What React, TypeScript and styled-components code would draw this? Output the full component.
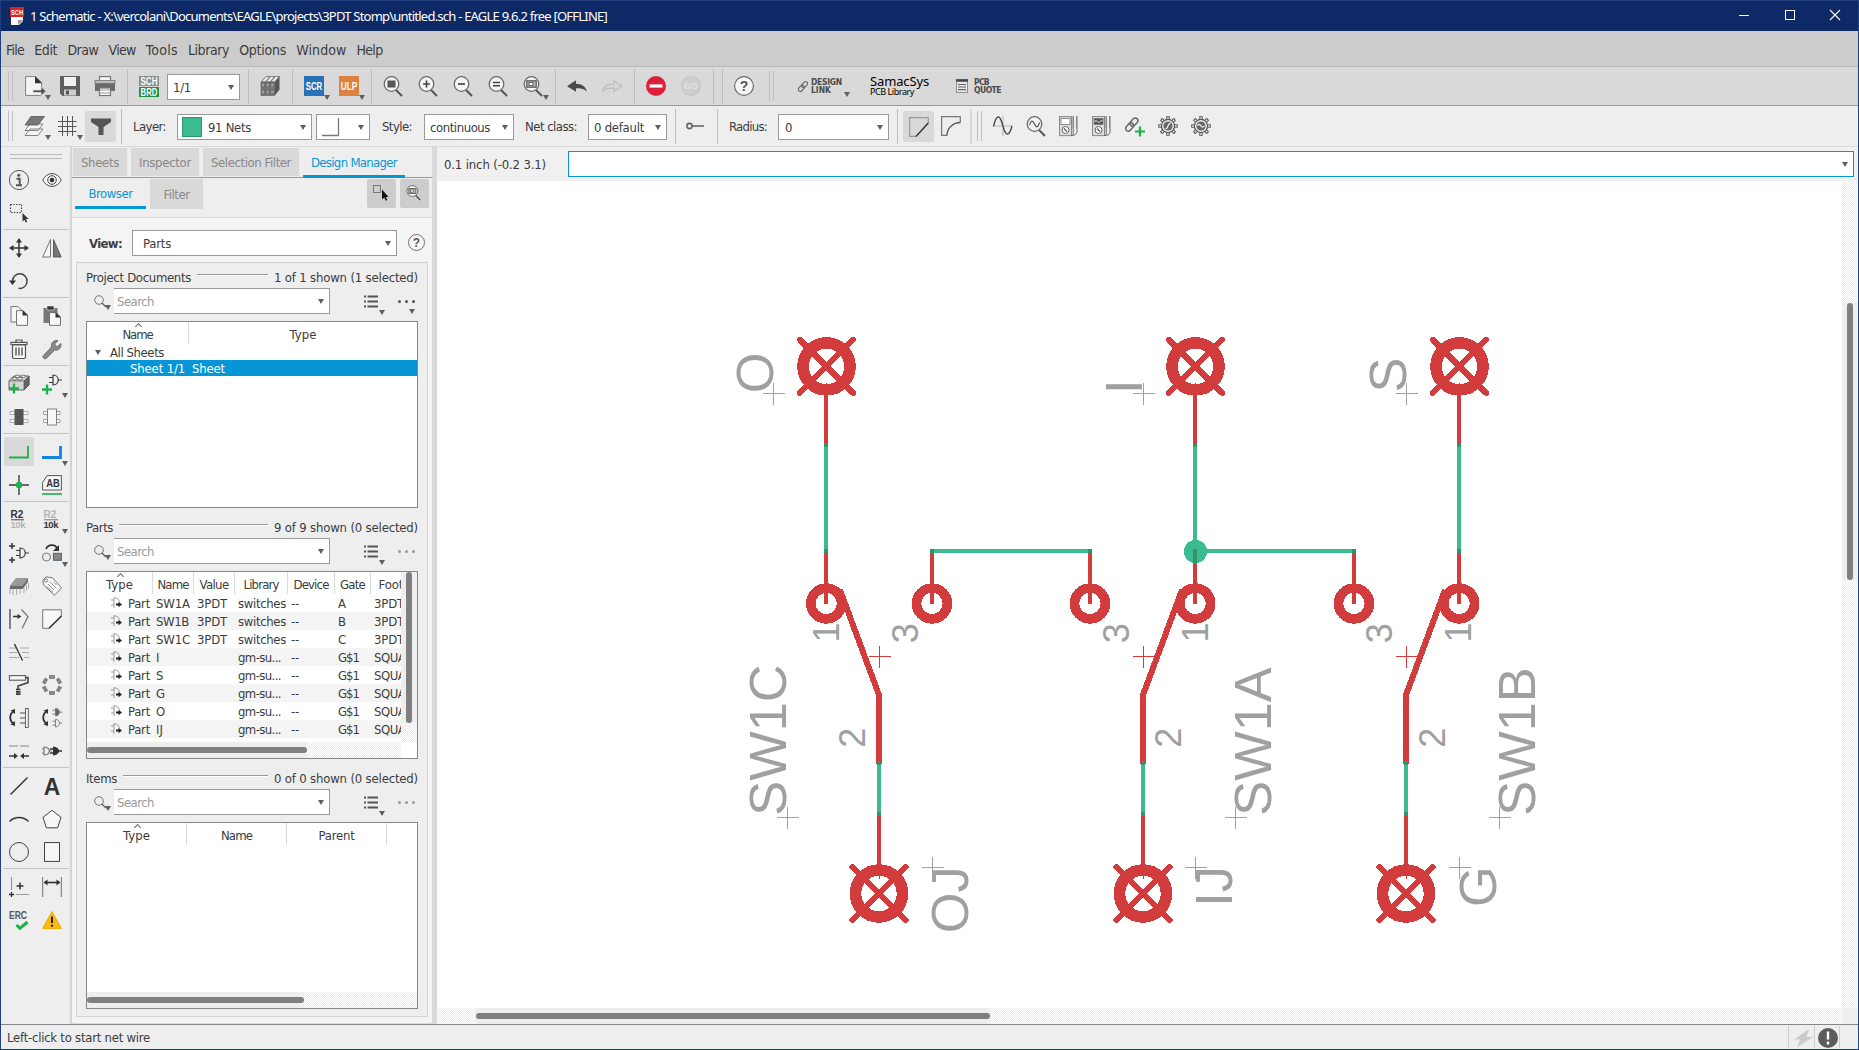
import React from "react";
import styled, { createGlobalStyle, css } from "styled-components";

const UI = '"DejaVu Sans Condensed", "DejaVu Sans", "Noto Sans", sans-serif';
const TITLE = '"Noto Sans", "Open Sans", sans-serif';
const DARK = "#3c3c3c";
const BLUE = "#0696d7";
const GREEN = "#1bb14c";

const Global = createGlobalStyle`
  * { box-sizing: border-box; }
  body { margin: 0; background: #eee; }
`;

/* ---------- text that keeps a given advance width ---------- */
const Label = styled.span<{ $size: number; $font: string; $color: string; $bold?: boolean }>`
  display: block;
  flex: none;
  white-space: pre;
  padding-top: 2px;
  font-family: ${(p) => p.$font};
  font-stretch: ${(p) => (p.$font === UI ? "condensed" : "normal")};
  font-size: ${(p) => p.$size}px;
  font-weight: ${(p) => (p.$bold ? 700 : 400)};
  color: ${(p) => p.$color};
  line-height: 16px;
`;

let pen: CanvasRenderingContext2D | null = null;
function spacingFor(text: string, width: number, size: number, font: string, bold?: boolean) {
  if (!pen) pen = document.createElement("canvas").getContext("2d");
  if (!pen) return 0;
  pen.font = `${bold ? "bold " : ""}${size}px ${font}`;
  return (width - pen.measureText(text).width) / text.length;
}

type TProps = { children: string; w?: number; size?: number; font?: string; color?: string; bold?: boolean };
function T({ children, w, size = 13, font = UI, color = DARK, bold }: TProps) {
  const style = w ? { width: w, letterSpacing: spacingFor(children, w, size, font, bold) } : undefined;
  return (
    <Label $size={size} $font={font} $color={color} $bold={bold} style={style}>
      {children}
    </Label>
  );
}

/* ---------- frame ---------- */
const Frame = styled.div`
  width: 1859px;
  height: 1050px;
  display: flex;
  flex-direction: column;
  border: 1px solid #213f7c;
  background: #eee;
  overflow: hidden;
`;
const TitleBar = styled.header`
  height: 30px;
  flex: none;
  display: flex;
  align-items: center;
  background: #0d2a66;
  padding-left: 8px;
`;
const TitleText = styled.div`
  margin-left: 5px;
  padding-bottom: 3px;
  flex: 1;
`;
const WindowButtons = styled.div`
  display: flex;
  gap: 35.5px;
  padding: 0 18px 2px 0;
`;
const MenuBar = styled.nav`
  height: 36px;
  flex: none;
  display: flex;
  align-items: center;
  padding-left: 5px;
  gap: 10.2px;
  background: #cccccc;
  border-bottom: 1px solid #b8b8b8;
`;
const ToolRow = styled.div<{ $light?: boolean }>`
  height: ${(p) => (p.$light ? 41 : 39)}px;
  flex: none;
  display: flex;
  align-items: center;
  background: ${(p) => (p.$light ? "#eeeeee" : "#d9d9d9")};
  border-bottom: 1px solid ${(p) => (p.$light ? "#d9d9d9" : "#999")};
`;
const Slot = styled.div<{ $ml: number; $w?: number; $h?: number; $on?: boolean }>`
  position: relative;
  flex: none;
  display: flex;
  flex-direction: column;
  align-items: ${(p) => (p.$on ? "center" : "flex-start")};
  justify-content: center;
  margin-left: ${(p) => p.$ml}px;
  margin-top: ${(p) => (p.$on ? 1 : 0)}px;
  width: ${(p) => p.$w ?? 20}px;
  height: ${(p) => p.$h ?? 20}px;
  border-radius: 2px;
  background: ${(p) => (p.$on ? "#d9d9d9" : "transparent")};
`;
const Sep = styled.div<{ $ml: number; $w?: number; $c?: string }>`
  flex: none;
  width: ${(p) => p.$w ?? 1}px;
  height: 35px;
  margin-left: ${(p) => p.$ml}px;
  background: ${(p) => p.$c ?? "#bdbdbd"};
`;
const Grip = styled.div<{ $ml: number }>`
  flex: none;
  width: 5px;
  height: 30px;
  margin-left: ${(p) => p.$ml}px;
  border-left: 1px solid #c0c0c0;
  border-right: 1px solid #c0c0c0;
`;
const caret = css`
  width: 0;
  height: 0;
  border-left: 3px solid transparent;
  border-right: 3px solid transparent;
  border-top: 5px solid #5f5f5f;
`;
const Caret = styled.i`
  ${caret}
  flex: none;
`;
const CornerCaret = styled.i<{ $r?: number; $b?: number }>`
  ${caret}
  position: absolute;
  right: ${(p) => p.$r ?? -6}px;
  bottom: ${(p) => p.$b ?? -4}px;
`;
const Combo = styled.div<{ $ml?: number; $w: number; $pad?: number; $right?: number; $flush?: boolean }>`
  flex: none;
  height: 26px;
  width: ${(p) => p.$w}px;
  margin-top: ${(p) => (p.$flush ? 0 : 2)}px;
  margin-left: ${(p) => p.$ml ?? 0}px;
  padding: 0 ${(p) => p.$right ?? 5}px 0 ${(p) => p.$pad ?? 5}px;
  display: flex;
  align-items: center;
  background: #fff;
  border: 1px solid #999;
`;
const Spring = styled.div`
  flex: 1;
`;
const Swatch = styled.div`
  width: 20px;
  height: 20px;
  margin: 0 6px 0 -1px;
  background: #3dba8f;
  border: 1px solid #2a9a74;
`;
const TwoLine = styled.div<{ $ml: number; $w: number }>`
  position: relative;
  flex: none;
  display: flex;
  flex-direction: column;
  margin-left: ${(p) => p.$ml}px;
  width: ${(p) => p.$w}px;
  & > span {
    padding: 0;
    line-height: 8px;
  }
`;
const Samac = styled(TwoLine)`
  & > span {
    line-height: 12px;
  }
  & > span + span {
    line-height: 10px;
  }
`;

/* ---------- icons ---------- */
const Svg = styled.svg<{ $w?: number; $h?: number }>`
  display: block;
  flex: none;
  width: ${(p) => p.$w ?? 20}px;
  height: ${(p) => p.$h ?? 20}px;
  overflow: visible;
  fill: none;
  stroke: ${DARK};
  stroke-width: 1.2;
`;
const Sized = styled.div<{ $s: number }>`
  flex: none;
  width: ${(p) => p.$s}px;
  height: ${(p) => p.$s}px;
  & > svg {
    width: ${(p) => p.$s}px;
    height: ${(p) => p.$s}px;
  }
`;
const Txt = styled.text`
  font-family: "Liberation Sans", sans-serif;
  font-weight: 700;
  stroke: none;
`;

const mag = (inner: React.ReactNode) => (
  <Svg viewBox="0 0 20 20">
    <path d="M13 14l6 6" stroke="#555" strokeWidth="2" />
    <circle cx="8.500" cy="8" r="7.300" fill="#f4f4f4" stroke="#6a6a6a" strokeWidth="1.300" />
    {inner}
  </Svg>
);
const gear = (inner: React.ReactNode) => (
  <Svg viewBox="0 0 20 20">
    <g stroke="#555" strokeWidth="3.400">
      {[0, 45, 90, 135, 180, 225, 270, 315].map((a) => (
        <path key={a} d="M10 3.600V.2" transform={`rotate(${a} 10 10)`} />
      ))}
    </g>
    <g stroke="#eee" strokeWidth="1.600">
      {[0, 45, 90, 135, 180, 225, 270, 315].map((a) => (
        <path key={a} d="M10 4V1.200" transform={`rotate(${a} 10 10)`} />
      ))}
    </g>
    <circle cx="10" cy="10" r="6.600" fill="#eee" stroke="#555" />
    <circle cx="10" cy="10" r="4.600" fill="#666" stroke="none" />
    {inner}
  </Svg>
);
const meter = (dark: boolean) => (
  <Svg viewBox="0 0 20 20">
    <rect x=".5" y=".6" width="12" height="19" fill="#dedede" stroke="#888" strokeWidth="1" />
    <rect x="2" y="2.500" width="9" height="6" fill={dark ? "#555" : "#fff"} stroke="#777" strokeWidth=".8" />
    {dark && <path d="M2.500 6c2-4 3 2 5 0s2-1 3-1" stroke="#fff" strokeWidth=".9" />}
    <circle cx="6.500" cy="14" r="3.500" fill="#fff" stroke="#666" strokeWidth="1" />
    <path d="M5 12.500l3 3" stroke="#555" />
    <path d="M14.200 0v12M17.800 0v12" stroke="#888" strokeWidth="1.600" />
    <path d="M14.200 12v5.500c0 2-1 2-2 2M17.800 12c1 4 0 7.500-5 7.500" stroke="#666" strokeWidth="1" />
  </Svg>
);
const chain = (
  <g stroke="#666" strokeWidth="1.300">
    <rect x="5.500" y="1.300" width="4.600" height="8" rx="2.300" transform="rotate(42 7.800 5.300)" />
    <rect x="1.700" y="5.600" width="4.600" height="8" rx="2.300" transform="rotate(42 4 9.600)" />
  </g>
);
const gate = (x: number, y: number, fill = "#eee", s = 1) => (
  <g transform={`translate(${x} ${y}) scale(${s})`}>
    <path d="M0 3h4M0 8h4M9 5.500h4" />
    <path d="M4 .5c7 0 7 10 0 10z" fill={fill} />
  </g>
);

const I: Record<string, React.ReactNode> = {
  app: (
    <Svg viewBox="0 0 16 20" $w={16} $h={20}>
      <path d="M2 8h12v7l-4 4H2z" fill="#fff" stroke="none" />
      <path d="M14 14l-5 5v-5z" fill="#999" stroke="none" />
      <rect x="1" y="1" width="14" height="10" fill="#d5242b" stroke="none" />
      <Txt x="8" y="8.500" fontSize="7" textLength="12" lengthAdjust="spacingAndGlyphs" textAnchor="middle" fill="#fff">SCH</Txt>
    </Svg>
  ),
  file: (
    <Svg viewBox="0 0 20 20">
      <path d="M.6.6h10l6 6V19.400H.6z" fill="#f5f5f5" stroke="#777" strokeWidth=".9" />
      <path d="M10 .2v7h7z" fill="#333" stroke="none" />
      <path d="M8 14h8v-3.500l5 4.700-5 4.600V16.500H8z" fill="#555" stroke="#d9d9d9" strokeWidth=".8" />
    </Svg>
  ),
  save: (
    <Svg viewBox="0 0 20 20">
      <path d="M0 0h20v20H2.500L0 17.500z" fill="#5f5f5f" stroke="none" />
      <rect x="4" y="1" width="12" height="9" fill="#f2f2f2" stroke="none" />
      <rect x="4" y="13.500" width="12" height="6" fill="#cfcfcf" stroke="none" />
      <rect x="6" y="14.500" width="3" height="4" fill="#555" stroke="none" />
    </Svg>
  ),
  print: (
    <Svg viewBox="0 0 20 20">
      <rect x="4.500" y=".6" width="11" height="7" fill="#f5f5f5" stroke="#777" />
      <rect x="0" y="4.500" width="20" height="3" fill="#bbb" stroke="#777" strokeWidth=".8" />
      <rect x="0" y="7.500" width="20" height="7.500" fill="#6b6b6b" stroke="none" />
      <rect x="4.500" y="12" width="11" height="7.500" fill="#fff" stroke="#777" />
      <path d="M5 14h10M5 17h10" stroke="#999" />
    </Svg>
  ),
  schbrd: (
    <Svg viewBox="0 0 20 20">
      <rect width="20" height="10" fill="#8d8d8d" stroke="none" />
      <rect y="11" width="20" height="10" fill="#1f8b45" stroke="none" />
      <Txt x="10" y="8.900" fontSize="10.500" textLength="17" lengthAdjust="spacingAndGlyphs" textAnchor="middle" fill="#fff">SCH</Txt>
      <Txt x="10" y="19.700" fontSize="10.500" textLength="17" lengthAdjust="spacingAndGlyphs" textAnchor="middle" fill="#fff">BRD</Txt>
    </Svg>
  ),
  books: (
    <Svg viewBox="0 0 20 20">
      {[0, 4.700, 9.400].map((x) => (
        <g key={x}>
          <path d={`M${x + 1} 6l5-5.500h4l-4.500 5.500z`} fill="#e8e8e8" stroke="#666" strokeWidth=".8" />
          <path d={`M${x + 1} 6h4.200v13.500h-4.200z`} fill="#777" stroke="#555" strokeWidth=".6" />
          <path d={`M${x + 2} 9h2M${x + 2} 16h2`} stroke="#ddd" strokeWidth=".9" />
        </g>
      ))}
      <path d="M14.800 6l4.700-5.500v13l-4.700 6z" fill="#555" stroke="none" />
    </Svg>
  ),
  scr: (
    <Svg viewBox="0 0 20 20">
      <rect width="20" height="20" fill="#2a72b8" stroke="none" />
      <Txt x="10" y="13.700" fontSize="10.500" textLength="16.500" lengthAdjust="spacingAndGlyphs" textAnchor="middle" fill="#fff">SCR</Txt>
    </Svg>
  ),
  ulp: (
    <Svg viewBox="0 0 20 20">
      <rect width="20" height="20" fill="#dd8140" stroke="none" />
      <Txt x="10" y="13.700" fontSize="10.500" textLength="16.500" lengthAdjust="spacingAndGlyphs" textAnchor="middle" fill="#fff">ULP</Txt>
    </Svg>
  ),
  zfit: mag(<rect x="4.500" y="4.500" width="8" height="7" fill="#555" stroke="none" />),
  zin: mag(<path d="M8.500 4.500v7M5 8h7" stroke="#444" strokeWidth="1.700" />),
  zout: mag(<path d="M5 8h7" stroke="#444" strokeWidth="1.700" />),
  zeq: mag(<path d="M5 6.500h7M5 9.800h7" stroke="#444" strokeWidth="1.500" />),
  zsel: mag(
    <g>
      <rect x="3.800" y="4.800" width="9.400" height="6.400" fill="#bbb" stroke="#555" />
      <rect x="6" y="6.500" width="4" height="3" fill="#fff" stroke="#555" strokeWidth=".9" />
    </g>
  ),
  zsine: mag(<path d="M3.500 9c2-6 3.500-4 5-1s3 5 5-1.500" stroke="#555" strokeWidth="1.200" />),
  undo: (
    <Svg viewBox="0 0 20 20">
      <path d="M0 10.200l9-6v3.500c6 0 10 3 11 8-3-3-6-3.500-11-3.300v3.400z" fill="#4a4a4a" stroke="none" />
    </Svg>
  ),
  redo: (
    <Svg viewBox="0 0 20 20">
      <path d="M20 10.200l-8-5.500v3.200C6 8 1.500 10.500.6 15.200c3-2.700 6-3.200 11.400-3v3.200z" fill="#d6d6d6" stroke="#bdbdbd" />
    </Svg>
  ),
  stop: (
    <Svg viewBox="0 0 20 20">
      <circle cx="10" cy="10" r="10" fill="#dc2039" stroke="none" />
      <path d="M3.500 10h13" stroke="#fff" strokeWidth="3.200" />
    </Svg>
  ),
  go: (
    <Svg viewBox="0 0 20 20">
      <circle cx="10" cy="10" r="9.500" fill="#cfcfcf" stroke="#c6c6c6" />
      <Txt x="10" y="13.400" fontSize="9" textAnchor="middle" fill="#e0e0e0">GO</Txt>
    </Svg>
  ),
  help: (
    <Svg viewBox="0 0 20 20">
      <circle cx="10" cy="10" r="9.400" fill="#f5f5f5" stroke="#666" strokeWidth="1.100" />
      <Txt x="10" y="15" fontSize="14" textAnchor="middle" fill="#555">?</Txt>
    </Svg>
  ),
  link: <Svg viewBox="0 0 12 15" $w={12} $h={13}>{chain}</Svg>,
  quote: (
    <Svg viewBox="0 0 12 14" $w={12} $h={14}>
      <rect x=".5" y=".5" width="11" height="13" fill="#e5e5e5" stroke="#888" strokeWidth=".9" />
      <path d="M0 1.500h12" stroke="#444" strokeWidth="2.500" />
      <path d="M2 5.500h8M2 8h8M2 10.700h8" stroke="#666" />
    </Svg>
  ),
  layers: (
    <Svg viewBox="0 0 20 20">
      <path d="M0 19.500l5-6.500h13l-5 6.500zM0 14.500l5-6.500h13l-5 6.500z" fill="#f5f5f5" stroke="#777" strokeWidth=".9" />
      <path d="M0 9L6 .5h13.500L13 9z" fill="#777" stroke="#555" strokeWidth=".8" />
    </Svg>
  ),
  grid: (
    <Svg viewBox="0 0 20 20">
      <path d="M5.500 0v20M10.500 0v20M15.500 0v20M1 5.500h18.500M1 10.500h18.500M1 15.500h18.500" stroke="#555" strokeWidth="1" />
    </Svg>
  ),
  funnel: (
    <Svg viewBox="0 0 20 20">
      <path d="M0 1.500h20v3.500l-7.500 5V18h-5V10L0 5z" fill="#555" stroke="none" />
    </Svg>
  ),
  bend: (
    <Svg viewBox="0 0 20 20">
      <path d="M0 18.500h16.500V1" stroke="#777" strokeWidth="1.300" />
    </Svg>
  ),
  pin: (
    <Svg viewBox="0 0 20 20">
      <circle cx="4.500" cy="10" r="2.600" stroke="#666" strokeWidth="1.600" />
      <path d="M7 10h12" stroke="#666" strokeWidth="1.600" />
    </Svg>
  ),
  miter: (
    <Svg viewBox="0 0 20 20">
      <path d="M19.300 6V.6H.6v18.800H7" fill="none" stroke="#999" />
      <path d="M7 19.400L19.300 6" stroke="#333" strokeWidth="1.500" />
    </Svg>
  ),
  round: (
    <Svg viewBox="0 0 20 20">
      <path d="M19.300 6V.6H.6v18.800H6" stroke="#777" />
      <path d="M6 19.400C6 12 12 6.500 19.500 6.500" stroke="#555" strokeWidth="1.300" />
    </Svg>
  ),
  sine: (
    <Svg viewBox="0 0 20 20">
      <path d="M10 0v20M0 10h20" stroke="#bbb" />
      <path d="M.5 10.500C3-1 6.500-2 9 7l2 6.500c2.500 7 5.500 6 8-3.500" stroke="#444" strokeWidth="1.300" />
    </Svg>
  ),
  meter: meter(false),
  meterDark: meter(true),
  linkAdd: (
    <Svg viewBox="0 0 20 20">
      <g transform="scale(1.150)">{chain}</g>
      <path d="M15 10.500v10M10 15.500h10" stroke={GREEN} strokeWidth="2.200" />
    </Svg>
  ),
  gearA: gear(<path d="M7.500 13c3 0 1.500-5 5-6" stroke="#fff" />),
  gearB: gear(<path d="M6.500 10c1.500-3 2.500-1 3.500 0s2 2 3.500-.5" stroke="#eee" />),
  info: (
    <Svg viewBox="0 0 20 20">
      <circle cx="10" cy="10" r="9.600" stroke="#444" strokeWidth=".9" />
      <circle cx="9.800" cy="5.300" r="1.500" fill="#555" stroke="none" />
      <path d="M7.500 8.700h3.200v6.300M7 15.200h6" stroke="#555" strokeWidth="1.900" />
    </Svg>
  ),
  eye: (
    <Svg viewBox="0 0 20 20">
      <path d="M.8 10C5 1.500 15 1.500 19.200 10 15 18.500 5 18.500.8 10z" stroke="#444" strokeWidth="1" fill="#f4f4f4" />
      <circle cx="10" cy="10" r="4.300" stroke="#444" strokeWidth="1" />
      <circle cx="10" cy="10" r="2.300" fill="#333" stroke="none" />
    </Svg>
  ),
  group: (
    <Svg viewBox="0 0 20 20">
      <rect x="1.500" y="1.500" width="11" height="8" stroke="#444" strokeDasharray="1.500 1.300" />
      <path d="M13.500 10v8.500l2-1.800 1.200 2.900 1.500-.7-1.200-2.800h2.600z" fill="#333" stroke="none" />
    </Svg>
  ),
  move: (
    <Svg viewBox="0 0 20 20">
      <path d="M10 2v16M2 10h16" stroke="#333" strokeWidth="1.500" />
      <path d="M10 0l3 4.500H7zM10 20l3-4.500H7zM0 10l4.500-3v6zM20 10l-4.500-3v6z" fill="#333" stroke="none" />
    </Svg>
  ),
  mirror: (
    <Svg viewBox="0 0 20 20">
      <path d="M8.500 1.500v17.500H.8z" fill="#f7f7f7" stroke="#666" strokeWidth=".9" />
      <path d="M11.500 1.500v17.500h7.700z" fill="#777" stroke="#555" strokeWidth=".9" />
    </Svg>
  ),
  rotate: (
    <Svg viewBox="0 0 20 20">
      <path d="M3.500 10a7.300 7.300 0 1 1 6 7.300" stroke="#444" strokeWidth="1.500" />
      <path d="M0 9.500h7L3.500 14z" fill="#333" stroke="none" />
    </Svg>
  ),
  copy: (
    <Svg viewBox="0 0 20 20">
      <path d="M2 .6h7l3 3V16H2z" fill="#f7f7f7" stroke="#666" strokeWidth=".9" />
      <path d="M7.500 4.600h6.500l4.500 4.500v10.300h-11z" fill="#f7f7f7" stroke="#666" strokeWidth=".9" />
      <path d="M13.500 4v5.500H19z" fill="#333" stroke="none" />
    </Svg>
  ),
  paste: (
    <Svg viewBox="0 0 20 20">
      <path d="M1.500 2h14v15h-14z" fill="#777" stroke="none" />
      <path d="M5 0h7v4H5z" fill="#333" stroke="#eee" strokeWidth=".6" />
      <path d="M7.500 6.600h6.500l4.500 4.500v8.300h-11z" fill="#f7f7f7" stroke="#666" strokeWidth=".9" />
      <path d="M13.500 6v5.500H19z" fill="#333" stroke="none" />
    </Svg>
  ),
  trash: (
    <Svg viewBox="0 0 20 20">
      <path d="M3.500 6h13v12c0 1-.5 1.500-1.500 1.500H5c-1 0-1.500-.5-1.500-1.500z" fill="#f7f7f7" stroke="#555" />
      <path d="M2 5.500V3.300h16v2.200zM7 3V1h6v2" stroke="#555" />
      <path d="M7 8.500v8M10 8.500v8M13 8.500v8" stroke="#555" strokeWidth="1.400" />
    </Svg>
  ),
  wrench: (
    <Svg viewBox="0 0 20 20">
      <path d="M1.500 16.500L9.500 8c-.8-4 2.500-7.500 6.500-6.300l-3.200 3 .6 2.200 2.200.6 3.200-3c1 4.200-2.400 7.400-6.300 6.500l-8 8.200c-2 1.500-4.500-.7-3-2.700z" fill="#8a8a8a" stroke="#555" strokeWidth=".8" />
    </Svg>
  ),
  addPart: (
    <Svg viewBox="0 0 20 20">
      <path d="M0 6.500L5 2h15v9l-5 5H0z" fill="#d5d5d5" stroke="#555" strokeWidth=".9" />
      <path d="M15 7v9l5-5V2z" fill="#666" stroke="#555" strokeWidth=".7" />
      <g fill="#f5f5f5" stroke="#555" strokeWidth=".8">
        <ellipse cx="5.500" cy="4.700" rx="2.300" ry="1.300" />
        <ellipse cx="11" cy="4.700" rx="2.300" ry="1.300" />
        <ellipse cx="8.500" cy="2.300" rx="2.200" ry="1.200" />
        <ellipse cx="14.500" cy="2.300" rx="2.200" ry="1.200" />
      </g>
      <path d="M0 6.900h15" stroke="#555" strokeWidth=".8" />
      <path d="M5 9.500v10M0 14.500h10" stroke={GREEN} strokeWidth="2.300" />
    </Svg>
  ),
  addGate: (
    <Svg viewBox="0 0 20 20">
      {gate(7, 0.5)}
      <path d="M5 10.500v10M0 15.500h10" stroke={GREEN} strokeWidth="2.300" />
    </Svg>
  ),
  chipDark: (
    <Svg viewBox="0 0 20 20">
      <path d="M1 4.500h5v3H1zM1 12.500h5v3H1zM14 4.500h5v3h-5zM14 12.500h5v3h-5z" fill="#fff" stroke="#999" strokeWidth=".8" />
      <rect x="5.500" y="2" width="9" height="16" fill="#555" stroke="none" />
    </Svg>
  ),
  chip: (
    <Svg viewBox="0 0 20 20">
      <path d="M1.500 4.500h4v3h-4zM1.500 12.500h4v3h-4zM14 4.500h4v3h-4zM14 12.500h4v3h-4z" fill="#fff" stroke="#888" strokeWidth=".8" />
      <rect x="5.500" y="2" width="9" height="16" fill="#f7f7f7" stroke="#777" strokeWidth=".9" />
    </Svg>
  ),
  net: <Svg viewBox="0 0 20 20"><path d="M0 15.500h19V4" stroke={GREEN} strokeWidth="1.800" /></Svg>,
  bus: <Svg viewBox="0 0 20 20"><path d="M0 15.500h18.500V4" stroke="#1683e0" strokeWidth="2.800" /></Svg>,
  junction: (
    <Svg viewBox="0 0 20 20">
      <path d="M10 0v20M0 10h20" stroke="#666" strokeWidth="1.800" />
      <circle cx="10" cy="10" r="3.200" fill={GREEN} stroke="none" />
    </Svg>
  ),
  label: (
    <Svg viewBox="0 0 20 20">
      <path d="M.6 7.500L5 .6h14.400v14.400H.6z" fill="#f7f7f7" stroke="#444" strokeWidth=".9" />
      <Txt x="11" y="12" fontSize="11" textLength="13.500" lengthAdjust="spacingAndGlyphs" textAnchor="middle" fill="#333">AB</Txt>
      <path d="M0 19h20" stroke={GREEN} strokeWidth="1.600" />
    </Svg>
  ),
  name: (
    <Svg viewBox="0 0 20 20">
      <Txt x="1.500" y="7.800" fontSize="10" fill="#333">R2</Txt>
      <path d="M2 9.800h13" strokeWidth="1" stroke="#444" />
      <Txt x="1.500" y="18.300" fontSize="9.500" fill="#b5b5b5" textLength="15">10k</Txt>
    </Svg>
  ),
  value: (
    <Svg viewBox="0 0 20 20">
      <Txt x="1.500" y="7.800" fontSize="10" fill="#b5b5b5">R2</Txt>
      <path d="M2 9.800h14" strokeWidth="1" stroke="#777" />
      <Txt x="1.500" y="18.300" fontSize="9.500" fill="#333" textLength="15">10k</Txt>
    </Svg>
  ),
  invoke: (
    <Svg viewBox="0 0 20 20">
      <path d="M3 0v6M0 3h6M3 14v6M0 17h6" stroke="#333" strokeWidth="1.500" />
      {gate(7, 4.5)}
    </Svg>
  ),
  replace: (
    <Svg viewBox="0 0 20 20">
      <path d="M4 6c2-5 9-5 11-1" stroke="#333" strokeWidth="1.700" />
      <path d="M17 2v6h-6z" fill="#333" stroke="none" />
      <circle cx="4.500" cy="14" r="4" stroke="#666" strokeWidth=".9" />
      <rect x="11.500" y="10.300" width="8" height="7" fill="#888" stroke="#4a5a6a" strokeWidth=".9" />
    </Svg>
  ),
  chip3d: (
    <Svg viewBox="0 0 20 20">
      <path d="M1 12v6M4 13v6M7.500 13v6M11 13v5M15 11v6M17.500 9v6M19.500 7v6" stroke="#aaa" strokeWidth="1" />
      <path d="M1 9.500l6-7.500h12l-5.500 7.500z" fill="#999" stroke="none" />
      <path d="M1 9.500h12.500V13H1zM13.500 9.500L19 2v4l-5.500 7z" fill="#6a6a6a" stroke="none" />
    </Svg>
  ),
  tag: (
    <Svg viewBox="0 0 20 20">
      <path d="M.8 4.500L4 .8l6.500 1 9 10-7 7.500-11-10.500z" fill="#f7f7f7" stroke="#666" strokeWidth=".9" />
      <circle cx="4" cy="4.500" r="1.600" stroke="#666" strokeWidth=".8" />
      <path d="M7.500 5.500l7 7M6 8l6 6M11.500 6l3 3M5 10.500l6 5.800" stroke="#888" strokeWidth=".9" />
    </Svg>
  ),
  split: (
    <Svg viewBox="0 0 20 20">
      <path d="M1 0v20" stroke="#444" strokeWidth="1.300" />
      <path d="M12.500.5l6.500 7-6 12" stroke="#777" strokeWidth="1.300" />
      <path d="M4 7.500h6" stroke="#333" strokeWidth="1.500" />
      <path d="M12.500 7.500L8.500 5v5z" fill="#333" stroke="none" />
    </Svg>
  ),
  miterTool: (
    <Svg viewBox="0 0 20 20">
      <path d="M19.300 7V.8H.7v18.500H7z" fill="#f7f7f7" stroke="#666" strokeWidth=".9" />
      <path d="M7 19.300L19.500 7" stroke="#333" strokeWidth="1.500" />
    </Svg>
  ),
  ripup: (
    <Svg viewBox="0 0 20 20">
      <path d="M0 6h7M11 6h9M0 10.500h8M13 10.500h7M0 15.500h10M15 15.500h5" stroke="#aaa" />
      <path d="M5.500 2l8 16.500" stroke="#333" strokeWidth="1.400" />
    </Svg>
  ),
  roller: (
    <Svg viewBox="0 0 20 20">
      <rect x=".5" y=".6" width="16" height="4.600" fill="#f7f7f7" stroke="#666" />
      <path d="M16.500 2.600h2.500v5L9 11v3" stroke="#444" strokeWidth="1.600" />
      <path d="M7 14.500h4.500M7 16.800h4.500M7 19.200h4.500" stroke="#333" strokeWidth="1.700" />
    </Svg>
  ),
  ring: (
    <Svg viewBox="0 0 20 20">
      {[0, 60, 120, 180, 240, 300].map((a) => (
        <rect key={a} x="7.500" y="0.500" width="5" height="3" fill="#888" stroke="#666" strokeWidth=".6" transform={`rotate(${a} 10 10)`} />
      ))}
    </Svg>
  ),
  pinswap: (
    <Svg viewBox="0 0 20 20">
      <path d="M5 3c-5 3-5 10 0 13" stroke="#333" strokeWidth="1.800" />
      <path d="M6 1v5L1.500 2.500zM6 18v-5L1.500 16.500z" fill="#333" stroke="none" />
      <path d="M11 5h6M11 10h6M11 15h6" stroke="#888" strokeWidth="1.500" />
      <rect x="16.500" y=".6" width="2.800" height="18.800" fill="#f7f7f7" stroke="#555" strokeWidth=".9" />
    </Svg>
  ),
  gateswap: (
    <Svg viewBox="0 0 20 20">
      <path d="M5 3c-5 3-5 10 0 13" stroke="#333" strokeWidth="1.800" />
      <path d="M6 1v5L1.500 2.500zM6 18v-5L1.500 16.500z" fill="#333" stroke="none" />
      <g stroke="#777">{gate(10.500, 0, "#666", 0.75)}{gate(10.500, 11, "#eee", 0.75)}</g>
    </Svg>
  ),
  optimize: (
    <Svg viewBox="0 0 20 20">
      <path d="M0 5h9M11 5h9" stroke="#aaa" strokeWidth="1.300" />
      <path d="M0 15h6M14 15h6" stroke="#333" strokeWidth="1.600" />
      <path d="M9 15l-4-3v6zM11 15l4-3v6z" fill="#333" stroke="none" />
    </Svg>
  ),
  join: (
    <Svg viewBox="0 0 20 20">
      <path d="M0 8h2M0 12h2M7 10h3" stroke="#777" />
      <path d="M2 6c7 0 7 8 0 8z" stroke="#777" />
      <path d="M8 8h4M8 12h4M16 10h4" stroke="#333" strokeWidth="1.500" />
      <path d="M11 5.500c8 0 8 9 0 9z" fill="#333" stroke="none" />
    </Svg>
  ),
  line: <Svg viewBox="0 0 20 20"><path d="M1.500 18.500L18.500 1.500" strokeWidth="1.500" stroke="#333" /></Svg>,
  text: <Svg viewBox="0 0 20 20"><Txt x="10" y="18.500" fontSize="24" textLength="16.500" lengthAdjust="spacingAndGlyphs" textAnchor="middle" fill="#333">A</Txt></Svg>,
  arc: <Svg viewBox="0 0 20 20"><path d="M.5 12.500C6 7.300 14 7.300 19.500 12.500" strokeWidth="1.500" stroke="#333" /></Svg>,
  polygon: (
    <Svg viewBox="0 0 20 20">
      <path d="M10 1.300l9 7-3.400 10.500H4.400L1 8.300z" fill="#f7f7f7" stroke="#444" strokeWidth="1" />
    </Svg>
  ),
  circle: <Svg viewBox="0 0 20 20"><circle cx="10" cy="10" r="9.500" stroke="#444" strokeWidth="1" /></Svg>,
  rect: <Svg viewBox="0 0 20 20"><rect x="2.500" y=".6" width="15" height="18.800" fill="#f7f7f7" stroke="#444" strokeWidth="1" /></Svg>,
  origin: (
    <Svg viewBox="0 0 20 20">
      <path d="M2.500 0v13M7 17.500h13" stroke="#999" />
      <path d="M11 5.500v7M7.500 9H14.500" stroke="#333" strokeWidth="1.500" />
      <path d="M2.500 15v5M0 17.500h5" stroke="#333" strokeWidth="1.300" />
    </Svg>
  ),
  dimension: (
    <Svg viewBox="0 0 20 20">
      <path d="M.6 0v20M19.400 0v20" stroke="#888" />
      <path d="M3 5.500h14" stroke="#333" strokeWidth="1.600" />
      <path d="M1.500 5.500l4-3v6zM18.500 5.500l-4-3v6z" fill="#333" stroke="none" />
    </Svg>
  ),
  erc: (
    <Svg viewBox="0 0 20 20">
      <Txt x="0" y="9" fontSize="11.800" fill="#555" textLength="18" lengthAdjust="spacingAndGlyphs">ERC</Txt>
      <path d="M7.500 15l3.500 3.300 7.500-6.300" stroke={GREEN} strokeWidth="3" />
    </Svg>
  ),
  warn: (
    <Svg viewBox="0 0 20 20">
      <path d="M10 1.800L19.300 18.500H.7z" fill="#fdb913" stroke="#f3b000" strokeWidth="1.200" strokeLinejoin="round" />
      <path d="M10 6.500v6.500M10 14.700v2" stroke="#222" strokeWidth="2" />
    </Svg>
  ),
  cursorBox: (
    <Svg viewBox="0 0 20 20">
      <rect x="2.500" y="2.500" width="7" height="7" stroke="#777" strokeWidth="1" />
      <path d="M11 6.500v10l2.300-2 1.500 3.300 1.500-.7-1.500-3.200h2.700z" fill="#111" stroke="none" />
    </Svg>
  ),
  minimize: <Svg viewBox="0 0 10 10" $w={10} $h={10}><path d="M0 5.500h10" stroke="#fff" strokeWidth="1" /></Svg>,
  maximize: <Svg viewBox="0 0 10 10" $w={10} $h={10}><rect x=".5" y=".5" width="9" height="9" stroke="#fff" strokeWidth="1" /></Svg>,
  close: <Svg viewBox="0 0 10 10" $w={10} $h={10}><path d="M0 0l10 10M10 0L0 10" stroke="#fff" strokeWidth="1.100" /></Svg>,
  lens: (
    <Svg viewBox="0 0 12 12" $w={12} $h={12}>
      <circle cx="5" cy="5" r="4.300" stroke="#777" strokeWidth="1" />
      <path d="M8 8l4 4" stroke="#666" strokeWidth="1.500" />
    </Svg>
  ),
  list: (
    <Svg viewBox="0 0 14 13" $w={14} $h={13}>
      <path d="M0 1.500h2M3.500 1.500H14M0 6.500h2M3.500 6.500H14M0 11.500h2M3.500 11.500H14" stroke="#555" strokeWidth="1.800" />
    </Svg>
  ),
  partGate: (
    <Svg viewBox="0 0 11 12" $w={11} $h={12}>
      <path d="M0 3h3M0 8h3M3 .5v10.500M3 .8c3 0 5 1.500 5.500 4" stroke="#999" strokeWidth="1" />
      <path d="M5 7.500h4" stroke="#222" strokeWidth="2" />
      <path d="M11 7.500L7.500 4.800v5.400z" fill="#222" stroke="none" />
    </Svg>
  ),
  bolt: (
    <Svg viewBox="0 0 20 18" $w={20} $h={18}>
      <path d="M16 0L1 10.500h6L4.500 18 20 8h-6.500L16 0z" fill="#cacaca" stroke="none" />
    </Svg>
  ),
  alert: (
    <Svg viewBox="0 0 20 20">
      <circle cx="10" cy="10" r="10" fill="#5c5c5c" stroke="none" />
      <path d="M10 3.500v8M10 13.500v3" stroke="#fff" strokeWidth="2.400" />
    </Svg>
  ),
};

/* ---------- body ---------- */
const Body = styled.main`
  flex: 1;
  min-height: 0;
  display: flex;
`;
const Palette = styled.aside`
  flex: none;
  width: 71px;
  padding-top: 7px;
  display: flex;
  flex-direction: column;
  border-right: 2px solid #d4d4d4;
  background: #eee;
`;
const PaletteGrip = styled.div`
  height: 5px;
  width: 52px;
  margin: 0 0 4px 9px;
  border-top: 1px solid #bdbdbd;
  border-bottom: 1px solid #bdbdbd;
`;
const PaletteRow = styled.div`
  height: 33px;
  flex: none;
  display: grid;
  grid-template-columns: 33px 33px;
  padding-left: 1px;
`;
const PaletteSep = styled.div`
  height: 2px;
  flex: none;
  margin: 0 1px 0 2px;
  border-top: 1px solid #c4c4c4;
`;
const Tool = styled.div<{ $on?: boolean }>`
  position: relative;
  width: 30px;
  height: 29px;
  margin: 2px 1px 2px 2px;
  display: flex;
  align-items: center;
  justify-content: center;
  border-radius: 2px;
  background: ${(p) => (p.$on ? "#d9d9d9" : "transparent")};
`;

const palette: string[][][] = [
  [["info", "eye"], ["group", ""]],
  [["move", "mirror"], ["rotate", ""]],
  [["copy", "paste"], ["trash", "wrench"]],
  [["addPart", "addGate"], ["chipDark", "chip"]],
  [["net", "bus"], ["junction", "label"]],
  [["name", "value"], ["invoke", "replace"], ["chip3d", "tag"], ["split", "miterTool"], ["ripup", ""], ["roller", "ring"], ["pinswap", "gateswap"], ["optimize", "join"]],
  [["line", "text"], ["arc", "polygon"], ["circle", "rect"]],
  [["origin", "dimension"], ["erc", "warn"]],
];
const withMenu = ["addGate", "bus", "value", "replace"];

/* ---------- dock ---------- */
const Dock = styled.section`
  flex: none;
  width: 365px;
  display: flex;
  flex-direction: column;
  border-right: 5px solid #d9d9d9;
  background: #eee;
`;
const Tabs = styled.div`
  height: 31px;
  flex: none;
  display: flex;
  padding: 1px 0 0 1px;
  gap: 4px;
  border-bottom: 1px solid #999;
`;
const Tab = styled.div<{ $w: number; $on?: boolean; $h?: number }>`
  width: ${(p) => p.$w}px;
  height: ${(p) => p.$h ?? 28}px;
  flex: none;
  display: flex;
  justify-content: center;
  align-items: center;
  padding-bottom: 1px;
  background: ${(p) => (p.$on ? "transparent" : "#d9d9d9")};
  ${(p) =>
    p.$on &&
    css`
      height: ${(p.$h ?? 28) + (p.$h ? 0 : 2)}px;
      padding-bottom: 0;
      border-bottom: 3px solid ${BLUE};
    `}
`;
const SubTabs = styled.div`
  height: 40px;
  flex: none;
  display: flex;
  padding: 1px 3px 0 3px;
  gap: 4px;
  border-bottom: 1px solid #d9d9d9;
`;
const DockButton = styled.div`
  width: 29px;
  height: 29px;
  display: flex;
  align-items: center;
  justify-content: center;
  padding: 0 2px 2px 0;
  background: #cdcdcd;
  border-radius: 2px;
`;
const Page = styled.div`
  flex: 1;
  min-height: 0;
  padding: 12px 4px 6px;
  display: flex;
  flex-direction: column;
  background: #f4f4f4;
  border-bottom: 1px solid #d9d9d9;
`;
const ViewRow = styled.div`
  height: 26px;
  flex: none;
  display: flex;
  align-items: center;
  padding-left: 13px;
  margin-bottom: 6px;
`;
const HelpDot = styled.div`
  margin: -2px 0 0 11px;
`;
const Group = styled.div`
  flex: 1;
  display: flex;
  flex-direction: column;
  padding: 0 9px;
  background: #eee;
  border: 1px solid #d4d4d4;
`;
const Head = styled.div<{ $top?: number }>`
  height: 25px;
  margin-top: ${(p) => p.$top ?? 0}px;
  flex: none;
  display: flex;
  align-items: center;
  padding-top: 2px;
`;
const Rule = styled.div`
  flex: 1;
  height: 2px;
  margin: -4px 6px 0;
  background: #999;
  border-bottom: 1px solid #fff;
`;
const SearchRow = styled.div`
  height: 26px;
  flex: none;
  display: flex;
  align-items: center;
  padding-left: 8px;
  margin-bottom: 7px;
`;
const SearchInput = styled.div`
  width: 216px;
  height: 26px;
  margin-left: 8px;
  padding: 0 5px 0 3px;
  display: flex;
  align-items: center;
  justify-content: space-between;
  background: #fff;
  border: 1px solid #999;
  border-left: 0;
`;
const Dots = styled.div<{ $dim?: boolean }>`
  position: relative;
  display: flex;
  gap: 4px;
  margin-left: 20px;
  i.dot {
    width: 3px;
    height: 3px;
    border-radius: 2px;
    background: ${(p) => (p.$dim ? "#999" : "#555")};
  }
`;
const Box = styled.div<{ $h: number }>`
  height: ${(p) => p.$h}px;
  flex: none;
  display: flex;
  flex-direction: column;
  background: #fff;
  border: 1px solid #868686;
  overflow: hidden;
`;
const HeaderRow = styled.div`
  height: 22px;
  flex: none;
  display: flex;
`;
const HCell = styled.div<{ $w: number }>`
  position: relative;
  width: ${(p) => p.$w}px;
  flex: none;
  display: flex;
  align-items: center;
  justify-content: center;
  padding-top: 1px;
  border-right: 1px solid #dadada;
`;
const SortMark = styled.i`
  position: absolute;
  top: 2px;
  left: calc(50% - 2px);
  width: 5px;
  height: 5px;
  border: solid #666;
  border-width: 1px 0 0 1px;
  transform: rotate(45deg);
`;
const TreeRow = styled.div<{ $on?: boolean }>`
  height: 16px;
  flex: none;
  display: flex;
  align-items: center;
  padding-left: ${(p) => (p.$on ? 43 : 8)}px;
  gap: ${(p) => (p.$on ? 7 : 9)}px;
  background: ${(p) => (p.$on ? BLUE : "#fff")};
`;
const TableArea = styled.div`
  height: 170px;
  flex: none;
  display: flex;
`;
const TableView = styled.div`
  width: 314px;
  overflow: hidden;
`;
const PartRow = styled.div<{ $alt: boolean }>`
  height: 18px;
  display: flex;
  align-items: center;
  background: ${(p) => (p.$alt ? "#f4f4f4" : "#fff")};
`;
const Cell = styled.div<{ $w: number; $pl?: number }>`
  width: ${(p) => p.$w}px;
  padding-left: ${(p) => p.$pl ?? 3}px;
  flex: none;
  display: flex;
  align-items: center;
  gap: 6px;
`;
const dither = css`
  background: repeating-conic-gradient(#ffffff 0 25%, #ececec 0 50%) 0 0 / 2px 2px;
`;
const VBar = styled.div`
  width: 16px;
  flex: none;
  ${dither}
`;
const HBar = styled.div<{ $w?: number }>`
  height: 16px;
  flex: none;
  display: flex;
  width: ${(p) => (p.$w ? p.$w + "px" : "auto")};
  ${dither}
`;
const VTrack = styled.div<{ $top: number; $h: number }>`
  height: ${(p) => p.$h + p.$top}px;
  padding: ${(p) => p.$top}px 5px 0;
  background: linear-gradient(#eee, #eee) 0 ${(p) => p.$top}px no-repeat;
  &::after {
    content: "";
    display: block;
    height: 100%;
    width: 6px;
    border-radius: 3px;
    background: #808080;
  }
`;
const HTrack = styled.div<{ $ml?: number; $w: number }>`
  width: ${(p) => p.$w}px;
  margin-left: ${(p) => p.$ml ?? 0}px;
  height: 16px;
  background: #eee;
  padding: 5px 0;
  &::after {
    content: "";
    display: block;
    height: 6px;
    border-radius: 3px;
    background: #808080;
  }
`;

/* ---------- editor ---------- */
const Editor = styled.section`
  flex: 1;
  min-width: 0;
  display: flex;
  flex-direction: column;
`;
const CommandRow = styled.div`
  height: 34px;
  flex: none;
  display: flex;
  align-items: center;
  padding: 0 4px 0 7px;
  background: #f0f0f0;
`;
const CommandInput = styled.div`
  flex: 1;
  height: 26px;
  margin-left: 22px;
  padding-right: 5px;
  display: flex;
  align-items: center;
  justify-content: flex-end;
  background: #fff;
  border: 1px solid ${BLUE};
`;
const CanvasRow = styled.div`
  flex: 1;
  min-height: 0;
  display: flex;
`;
const Sheet = styled.svg`
  width: 1405px;
  height: 827px;
  flex: none;
  background: #fff;
  shape-rendering: crispEdges;
`;
const SheetText = styled.text`
  font-family: "Liberation Sans", sans-serif;
  fill: #a0a0a0;
`;
const ScrollRow = styled.div`
  display: flex;
  height: 16px;
  flex: none;
  background: #eee;
`;
const Status = styled.footer`
  height: 25px;
  flex: none;
  display: flex;
  align-items: center;
  padding-left: 6px;
  background: #eee;
  border-top: 1px solid #868686;
`;
const StatusCell = styled.div<{ $w: number }>`
  width: ${(p) => p.$w}px;
  height: 22px;
  display: flex;
  align-items: center;
  justify-content: center;
  padding: 1px 0 0 2px;
  border-left: 1px solid #cfcfcf;
`;

const RED = "#d33c3d";
const NET = "#3dbb90";
const OVER = "#31956a";

const Pad = ({ x, y }: { x: number; y: number }) => (
  <g stroke={RED} fill="none">
    <circle cx={x} cy={y} r="23.500" strokeWidth="11.600" />
    <path d={`M${x - 26.700} ${y - 26.700}L${x + 26.700} ${y + 26.700}M${x + 26.700} ${y - 26.700}L${x - 26.700} ${y + 26.700}`} strokeWidth="5.800" strokeLinecap="round" />
  </g>
);
const Ring = ({ x }: { x: number }) => <circle cx={x} cy="603.500" r="15.400" fill="none" stroke={RED} strokeWidth="9.600" />;
const Cross = ({ x, y, c = "#a0a0a0" }: { x: number; y: number; c?: string }) => (
  <path d={`M${x - 11} ${y}h22M${x} ${y - 11}v22`} stroke={c} strokeWidth="1" />
);
const Up = ({ x, y, s = 52.4, children }: { x: number; y: number; s?: number; children: string }) => (
  <SheetText transform={`translate(${x} ${y}) rotate(-90)`} fontSize={s}>{children}</SheetText>
);
const Wire = ({ d, c }: { d: string; c: string }) => <path d={d} stroke={c} strokeWidth="4" fill="none" />;

const switches = [
  { pin: 826, top: 840, arm: 879, other: 932, label: "SW1C", tx: 786, cross: 787.5 },
  { pin: 1195, top: 1182, arm: 1143, other: 1090, label: "SW1A", tx: 1271, cross: 1235.5 },
  { pin: 1459, top: 1445, arm: 1406, other: 1354, label: "SW1B", tx: 1535, cross: 1499.5 },
];

const pinNumbers: [number, number, string][] = [
  [839, 642.5, "1"], [1208, 642.5, "1"], [1471, 642.5, "1"],
  [917.5, 643.3, "3"], [1128.5, 643.3, "3"], [1391.5, 643.3, "3"],
  [865, 747.8, "2"], [1181, 747.8, "2"], [1445, 747.8, "2"],
];

function Schematic() {
  return (
    <Sheet viewBox="437 181 1405 827">
      <Up x={773} y={393.3}>O</Up>
      <Up x={1142} y={394}>I</Up>
      <Up x={1406} y={392.5}>S</Up>
      <Up x={968} y={933.3}>OJ</Up>
      <Up x={1232} y={906.8}>IJ</Up>
      <Up x={1496} y={907}>G</Up>
      {pinNumbers.map(([x, y, t]) => (
        <Up key={`${x}-${t}`} x={x} y={y} s={36}>{t}</Up>
      ))}
      {[[773.5, 393.5], [1143.5, 393.5], [1406.5, 393.5], [932.5, 867.5], [1195.5, 867.5], [1459.5, 867.5]].map(([x, y]) => (
        <Cross key={`${x}-${y}`} x={x} y={y} />
      ))}
      {switches.map((s) => (
        <g key={s.label}>
          <Up x={s.tx} y={815.7}>{s.label}</Up>
          <Cross x={s.cross} y={817.5} />
          <Cross x={s.arm + 0.5} y={656.5} c={RED} />
          <Cross x={s.pin + 0.5} y={393.5} c={RED} />
          <Cross x={s.arm + 0.5} y={867.5} c={RED} />
          <Pad x={s.pin + 0.5} y={366.4} />
          <Pad x={s.arm} y={893.5} />
          <Ring x={s.pin + 0.3} />
          <Ring x={s.other} />
          <path d={`M${s.top} 590L${s.arm} 695V764`} stroke={RED} strokeWidth="6" fill="none" strokeLinejoin="round" />
          <Wire d={`M${s.pin} 390V445M${s.pin} 551V604M${s.arm} 814V869M${s.other} 551V604`} c={RED} />
          <Wire d={`M${s.pin} 445V551M${s.arm} 763V814`} c={NET} />
        </g>
      ))}
      <Wire d="M932 551H1090M1195 551H1354" c={NET} />
      <circle cx="1195.500" cy="551.500" r="11.500" fill={NET} />
      <path d="M1193 549.500h4v14h-4z" fill={OVER} />
      {switches.map((s) => (
        <g key={s.label} fill={OVER}>
          {[[s.pin, 445], [s.pin, 551], [s.arm, 763], [s.arm, 814], [s.other, 551]].map(([x, y]) => (
            <circle key={`${x}-${y}`} cx={x} cy={y} r="2.200" />
          ))}
        </g>
      ))}
    </Sheet>
  );
}

function SearchBar({ dim }: { dim?: boolean }) {
  return (
    <SearchRow>
      <Slot $ml={0} $w={12} $h={12}>
        {I.lens}
        <CornerCaret $r={-5} $b={-3} />
      </Slot>
      <SearchInput>
        <T color="#999" w={37}>Search</T>
        <Caret />
      </SearchInput>
      <Slot $ml={34} $w={14} $h={13}>
        {I.list}
        <CornerCaret $r={-7} $b={-7} />
      </Slot>
      <Dots $dim={dim}>
        <i className="dot" />
        <i className="dot" />
        <i className="dot" />
        {!dim && <CornerCaret $r={0} $b={-11} />}
      </Dots>
    </SearchRow>
  );
}

const columns: [string, number, number][] = [
  ["Type", 66, 27], ["Name", 41, 31], ["Value", 41, 29], ["Library", 53, 35], ["Device", 47, 35], ["Gate", 36, 25], ["Footprint", 68, 52],
];
const parts = [
  ["SW1A", "3PDT", "switches", "A", "3PDT"],
  ["SW1B", "3PDT", "switches", "B", "3PDT"],
  ["SW1C", "3PDT", "switches", "C", "3PDT"],
  ["I", "", "gm-su...", "G$1", "SQUARE"],
  ["S", "", "gm-su...", "G$1", "SQUARE"],
  ["G", "", "gm-su...", "G$1", "SQUARE"],
  ["O", "", "gm-su...", "G$1", "SQUARE"],
  ["IJ", "", "gm-su...", "G$1", "SQUARE"],
];
const widths: Record<string, number> = { SW1A: 34, SW1B: 33, SW1C: 34, "3PDT": 30, switches: 48, "gm-su...": 43, "G$1": 21, SQUARE: 46 };
const menus: [string, number][] = [
  ["File", 18], ["Edit", 23], ["Draw", 31], ["View", 27], ["Tools", 32], ["Library", 41], ["Options", 47], ["Window", 50], ["Help", 26],
];

const Item = ({ n, ml, menu }: { n: string; ml: number; menu?: boolean }) => (
  <Slot $ml={ml}>
    {I[n]}
    {menu && <CornerCaret />}
  </Slot>
);

export default function App() {
  return (
    <Frame>
      <Global />
      <TitleBar>
        {I.app}
        <TitleText><T size={13} font={TITLE} color="#fff" w={577}>{"1 Schematic - X:\\vercolani\\Documents\\EAGLE\\projects\\3PDT Stomp\\untitled.sch - EAGLE 9.6.2 free [OFFLINE]"}</T></TitleText>
        <WindowButtons>{I.minimize}{I.maximize}{I.close}</WindowButtons>
      </TitleBar>
      <MenuBar>
        {menus.map(([m, w]) => <T key={m} size={14} w={w}>{m}</T>)}
      </MenuBar>
      <ToolRow>
        <Grip $ml={7} />
        <Item n="file" ml={12} menu />
        <Item n="save" ml={15} />
        <Item n="print" ml={15} />
        <Sep $ml={12} />
        <Item n="schbrd" ml={11} />
        <Combo $ml={8} $w={73}><T w={18}>1/1</T><Spring /><Caret /></Combo>
        <Sep $ml={8} />
        <Item n="books" ml={11} />
        <Sep $ml={12} />
        <Item n="scr" ml={11} menu />
        <Item n="ulp" ml={15} menu />
        <Sep $ml={12} />
        <Item n="zfit" ml={11} />
        <Item n="zin" ml={15} />
        <Item n="zout" ml={15} />
        <Item n="zeq" ml={15} />
        <Item n="zsel" ml={15} menu />
        <Sep $ml={12} />
        <Item n="undo" ml={11} />
        <Item n="redo" ml={15} />
        <Sep $ml={12} />
        <Item n="stop" ml={11} />
        <Item n="go" ml={15} />
        <Sep $ml={12} />
        <Sep $ml={8} />
        <Item n="help" ml={11} />
        <Grip $ml={15} />
        <Slot $ml={23} $w={12}>{I.link}</Slot>
        <TwoLine $ml={2} $w={32}>
          <T size={8.5} w={31} color="#4a4a4a" bold>DESIGN</T>
          <T size={8.5} w={20} color="#4a4a4a" bold>LINK</T>
          <CornerCaret $r={-7} $b={-3} />
        </TwoLine>
        <Samac $ml={27} $w={60}>
          <T size={13} w={59} font='"Noto Sans", sans-serif' color="#000">SamacSys</T>
          <T size={9} w={44} font='"Noto Sans", sans-serif' color="#000">PCB Library</T>
        </Samac>
        <Slot $ml={26} $w={12}>{I.quote}</Slot>
        <TwoLine $ml={6} $w={28}>
          <T size={8.5} w={15} color="#4a4a4a" bold>PCB</T>
          <T size={8.5} w={27} color="#4a4a4a" bold>QUOTE</T>
        </TwoLine>
      </ToolRow>
      <ToolRow $light>
        <Grip $ml={7} />
        <Item n="layers" ml={12} menu />
        <Item n="grid" ml={12} menu />
        <Slot $ml={8} $w={31} $h={31} $on>{I.funnel}</Slot>
        <Sep $ml={5} />
        <Slot $ml={11} $w={32}><T w={33}>Layer:</T></Slot>
        <Combo $ml={12} $w={135}><Swatch /><T w={43}>91 Nets</T><Spring /><Caret /></Combo>
        <Combo $ml={4} $w={54}>{I.bend}<Spring /><Caret /></Combo>
        <Slot $ml={12} $w={30}><T w={30}>Style:</T></Slot>
        <Combo $ml={12} $w={90}><T w={60}>continuous</T><Spring /><Caret /></Combo>
        <Slot $ml={11} $w={52}><T w={52}>Net class:</T></Slot>
        <Combo $ml={11} $w={79}><T w={50}>0 default</T><Spring /><Caret /></Combo>
        <Sep $ml={8} />
        <Item n="pin" ml={9} />
        <Sep $ml={12} />
        <Slot $ml={11} $w={38}><T w={38}>Radius:</T></Slot>
        <Combo $ml={11} $w={111} $pad={6}><T>0</T><Spring /><Caret /></Combo>
        <Sep $ml={8} />
        <Slot $ml={5} $w={31} $h={31} $on>{I.miter}</Slot>
        <Item n="round" ml={7} />
        <Sep $ml={9} $w={2} $c="#d9d9d9" />
        <Grip $ml={5} />
        <Item n="sine" ml={11} />
        <Item n="zsine" ml={13} />
        <Item n="meter" ml={13} />
        <Item n="meterDark" ml={13} />
        <Item n="linkAdd" ml={13} />
        <Item n="gearA" ml={13} />
        <Item n="gearB" ml={13} />
      </ToolRow>
      <Body>
        <Palette>
          <PaletteGrip />
          {palette.map((rows, g) => (
            <React.Fragment key={g}>
              {g > 0 && <PaletteSep />}
              {rows.map((r) => (
                <PaletteRow key={r[0]}>
                  {r.map((n) => (
                    <Tool key={n} $on={n === "net"}>
                      {I[n]}
                      {withMenu.includes(n) && <CornerCaret $r={-1} $b={0} />}
                    </Tool>
                  ))}
                </PaletteRow>
              ))}
            </React.Fragment>
          ))}
        </Palette>
        <Dock>
          <Tabs>
            <Tab $w={54}><T color="#888" w={38}>Sheets</T></Tab>
            <Tab $w={68}><T color="#888" w={52}>Inspector</T></Tab>
            <Tab $w={96}><T color="#888" w={80}>Selection Filter</T></Tab>
            <Tab $w={102} $on><T color={BLUE} w={86}>Design Manager</T></Tab>
          </Tabs>
          <SubTabs>
            <Tab $w={71} $h={30} $on><T color={BLUE} w={44}>Browser</T></Tab>
            <Tab $w={53} $h={30}><T color="#888" w={26}>Filter</T></Tab>
            <Spring />
            <DockButton>{I.cursorBox}</DockButton>
            <DockButton><Sized $s={15}>{I.zsel}</Sized></DockButton>
          </SubTabs>
          <Page>
            <ViewRow>
              <T bold w={33}>View:</T>
              <Combo $ml={10} $w={265} $pad={10} $right={5} $flush><T w={28}>Parts</T><Spring /><Caret /></Combo>
              <HelpDot><Sized $s={17}>{I.help}</Sized></HelpDot>
            </ViewRow>
            <Group>
              <Head>
                <T w={105}>Project Documents</T><Rule /><T w={144}>1 of 1 shown (1 selected)</T>
              </Head>
              <SearchBar />
              <Box $h={187}>
                <HeaderRow>
                  <HCell $w={102}><SortMark /><T w={30}>Name</T></HCell>
                  <HCell $w={229}><T w={27}>Type</T></HCell>
                </HeaderRow>
                <TreeRow><Caret /><T w={54}>All Sheets</T></TreeRow>
                <TreeRow $on><T color="#fff" w={55}>Sheet 1/1</T><T color="#fff" w={33}>Sheet</T></TreeRow>
              </Box>
              <Head $top={5}>
                <T w={27}>Parts</T><Rule /><T w={144}>9 of 9 shown (0 selected)</T>
              </Head>
              <SearchBar dim />
              <Box $h={188}>
                <TableArea>
                  <TableView>
                    <HeaderRow>
                      {columns.map(([c, w, tw], i) => (
                        <HCell key={c} $w={w}>{i === 0 && <SortMark />}<T w={tw}>{c}</T></HCell>
                      ))}
                    </HeaderRow>
                    {parts.map((p, i) => (
                      <PartRow key={p[0]} $alt={i % 2 === 1}>
                        <Cell $w={66} $pl={24}>{I.partGate}<T w={22}>Part</T></Cell>
                        <Cell $w={41}><T w={widths[p[0]]}>{p[0]}</T></Cell>
                        <Cell $w={41}>{p[1] ? <T w={widths[p[1]]}>{p[1]}</T> : null}</Cell>
                        <Cell $w={53}><T w={widths[p[2]]}>{p[2]}</T></Cell>
                        <Cell $w={47}><T w={8}>--</T></Cell>
                        <Cell $w={36}><T w={widths[p[3]]}>{p[3]}</T></Cell>
                        <Cell $w={80}><T w={widths[p[4]]}>{p[4]}</T></Cell>
                      </PartRow>
                    ))}
                  </TableView>
                  <VBar><VTrack $top={0} $h={151} /></VBar>
                </TableArea>
                <HBar $w={314}><HTrack $w={220} /></HBar>
              </Box>
              <Head $top={5}>
                <T w={31}>Items</T><Rule /><T w={144}>0 of 0 shown (0 selected)</T>
              </Head>
              <SearchBar dim />
              <Box $h={187}>
                <HeaderRow>
                  <HCell $w={100}><SortMark /><T w={27}>Type</T></HCell>
                  <HCell $w={100}><T w={31}>Name</T></HCell>
                  <HCell $w={100}><T w={36}>Parent</T></HCell>
                </HeaderRow>
                <Spring />
                <HBar><HTrack $w={217} /></HBar>
              </Box>
            </Group>
          </Page>
        </Dock>
        <Editor>
          <CommandRow>
            <T w={102}>0.1 inch (-0.2 3.1)</T>
            <CommandInput><Caret /></CommandInput>
          </CommandRow>
          <CanvasRow>
            <Schematic />
            <VBar><VTrack $top={122} $h={277} /></VBar>
          </CanvasRow>
          <ScrollRow>
            <HBar $w={1405}><HTrack $ml={39} $w={514} /></HBar>
          </ScrollRow>
        </Editor>
      </Body>
      <Status>
        <T w={143}>Left-click to start net wire</T>
        <Spring />
        <StatusCell $w={26}>{I.bolt}</StatusCell>
        <StatusCell $w={25}>{I.alert}</StatusCell>
        <StatusCell $w={19} />
      </Status>
    </Frame>
  );
}
